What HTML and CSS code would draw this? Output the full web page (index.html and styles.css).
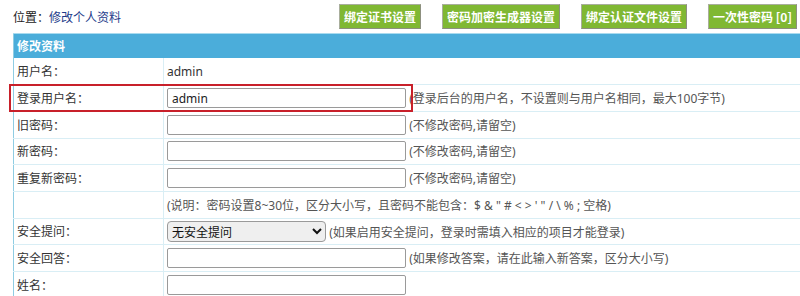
FILE: index.html
```html
<!DOCTYPE html>
<html>
  <head>
    <link rel="stylesheet" href="styles.css">
  </head>
  <body>
    <div class="topbar">
      <div class="place">位置：<a href="#">修改个人资料</a></div>
      <div class="btns">
        <button class="green-btn">绑定证书设置</button>
        <button class="green-btn">密码加密生成器设置</button>
        <button class="green-btn">绑定认证文件设置</button>
        <button class="green-btn">一次性密码 [0]</button>
      </div>
    </div>

    <div class="form-wrap">
      <table class="form-table">
        <tr class="head">
          <th colspan="2">修改资料</th>
        </tr>
        <tr>
          <td class="label">用户名：</td>
          <td class="value">admin</td>
        </tr>
        <tr>
          <td class="label">登录用户名：</td>
          <td class="value"><input class="txt" type="text" value="admin"> <span class="hint">(登录后台的用户名，不设置则与用户名相同，最大100字节)</span></td>
        </tr>
        <tr>
          <td class="label">旧密码：</td>
          <td class="value"><input class="txt" type="password"> <span class="hint">(不修改密码,请留空)</span></td>
        </tr>
        <tr>
          <td class="label">新密码：</td>
          <td class="value"><input class="txt" type="password"> <span class="hint">(不修改密码,请留空)</span></td>
        </tr>
        <tr>
          <td class="label">重复新密码：</td>
          <td class="value"><input class="txt" type="password"> <span class="hint">(不修改密码,请留空)</span></td>
        </tr>
        <tr>
          <td class="label"></td>
          <td class="value"><span class="hint">(说明：密码设置8~30位，区分大小写，且密码不能包含：$ &amp; " # &lt; &gt; ' " / \ % ; 空格)</span></td>
        </tr>
        <tr>
          <td class="label">安全提问：</td>
          <td class="value"><select class="sel"><option>无安全提问</option></select> <span class="hint">(如果启用安全提问，登录时需填入相应的项目才能登录)</span></td>
        </tr>
        <tr>
          <td class="label">安全回答：</td>
          <td class="value"><input class="txt" type="text"> <span class="hint">(如果修改答案，请在此输入新答案，区分大小写)</span></td>
        </tr>
        <tr>
          <td class="label">姓名：</td>
          <td class="value"><input class="txt" type="text"></td>
        </tr>
      </table>
      <div class="mark"></div>
    </div>
  </body>
</html>
```

FILE: styles.css
```css
body {
  margin: 0;
  padding: 0;
  width: 800px;
  height: 296px;
  overflow: hidden;
  background-color: #fff;
  font-family: "Noto Sans", "Noto Sans CJK SC", sans-serif;
  font-size: 12px;
  color: #333;
}

.topbar {
  display: flex;
  justify-content: space-between;
  align-items: center;
  height: 33px;
  padding: 0 3px 0 13px;
}

.place {
  font-size: 12px;
  color: #222;
}

.place a {
  color: #1d3b8a;
  text-decoration: none;
}

.btns {
  display: flex;
  gap: 21px;
  margin-top: -1px;
}

.green-btn {
  height: 25px;
  padding: 0 4px;
  background-color: #80b833;
  color: #fff;
  font-family: "Noto Sans CJK SC", sans-serif;
  font-size: 12px;
  font-weight: bold;
  border: 1px solid #a9ae9c;
  border-right-color: #8d907f;
  border-bottom-color: #8d907f;
  cursor: pointer;
}

.form-wrap {
  position: relative;
  padding-left: 13px;
}

.form-table {
  width: 800px;
  border-collapse: collapse;
  border-top: 1px solid #a9dbef;
  border-left: 1px solid #8fcde3;
}

.form-table th {
  height: 24px;
  padding: 0 0 0 3px;
  background-color: #4badda;
  color: #fff;
  font-weight: bold;
  font-size: 12px;
  text-align: left;
}

.form-table td {
  height: 26.7px;
  padding: 0;
  border-bottom: 1px solid #d9eef5;
  box-sizing: border-box;
}

.form-table .label {
  width: 150px;
  padding-left: 3px;
  border-right: 1px solid #d9eef5;
}

.form-table .value {
  padding-left: 3px;
}

.txt {
  width: 239px;
  height: 20px;
  box-sizing: border-box;
  padding: 0 4px;
  border: 1px solid #9a9a9a;
  border-radius: 2px;
  font-family: "Noto Sans", sans-serif;
  font-size: 12px;
  color: #222;
  vertical-align: middle;
}

.sel {
  width: 159px;
  height: 21px;
  box-sizing: border-box;
  border: 1px solid #9a9a9a;
  border-radius: 4px;
  background-color: #efefef;
  font-family: "Noto Sans CJK SC", sans-serif;
  font-size: 12px;
  color: #111;
  vertical-align: middle;
}

.hint {
  color: #555;
  vertical-align: middle;
}

.mark {
  position: absolute;
  left: 9px;
  top: 51px;
  width: 400px;
  height: 24px;
  border: 2px solid #c8202a;
}
```
